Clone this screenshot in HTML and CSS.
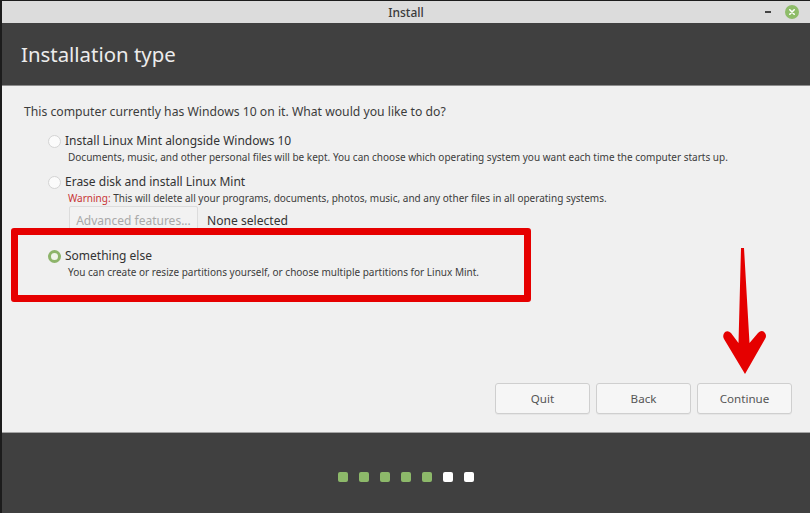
FILE: index.html
```html
<!DOCTYPE html>
<html>
<head>
<meta charset="utf-8">
<link rel="stylesheet" href="styles.css">
</head>
<body>
<div class="window">
  <div class="titlebar">
    <span class="title">Install</span>
    <div class="controls">
      <span class="minimize"></span>
      <span class="close">
        <svg class="close-icon" width="14" height="14" viewBox="0 0 14 14"><circle cx="7" cy="7" r="7" fill="#8ebc69"/><path d="M4.8 4.8 L9.2 9.2 M9.2 4.8 L4.8 9.2" stroke="#fff" stroke-width="1.6" stroke-linecap="round"/></svg>
      </span>
    </div>
  </div>
  <div class="header">
    <h1 class="page-title">Installation type</h1>
  </div>
  <div class="content">
    <p class="intro">This computer currently has Windows 10 on it. What would you like to do?</p>
    <div class="option opt1">
      <div class="opt-label"><span class="radio"></span>Install Linux Mint alongside Windows 10</div>
      <div class="opt-desc">Documents, music, and other personal files will be kept. You can choose which operating system you want each time the computer starts up.</div>
    </div>
    <div class="option opt2">
      <div class="opt-label"><span class="radio"></span>Erase disk and install Linux Mint</div>
      <div class="opt-desc"><span class="warn">Warning:</span> This will delete all your programs, documents, photos, music, and any other files in all operating systems.</div>
      <div class="adv-row">
        <span class="adv-btn">Advanced features...</span>
        <span class="adv-value">None selected</span>
      </div>
    </div>
    <div class="option opt3">
      <div class="opt-label"><span class="radio checked"></span>Something else</div>
      <div class="opt-desc">You can create or resize partitions yourself, or choose multiple partitions for Linux Mint.</div>
    </div>
    <div class="spacer"></div>
    <div class="buttons">
      <span class="btn">Quit</span>
      <span class="btn">Back</span>
      <span class="btn">Continue</span>
    </div>
    <div class="highlight"></div>
    <svg class="arrow" width="50" height="132" viewBox="0 0 50 132">
      <path d="M21 3 L24 3 L29.5 98 L38 88 Q42 84 45 88 Q47 91 45 94 L25 129 L4 94 Q2 90 5 87 Q8 85 11 88 L18.5 98 Z" fill="#e50000"/>
    </svg>
  </div>
  <div class="footer">
    <div class="dots">
      <span class="dot done"></span><span class="dot done"></span><span class="dot done"></span><span class="dot done"></span><span class="dot done"></span><span class="dot"></span><span class="dot"></span>
    </div>
  </div>
</div>
</body>
</html>
```
FILE: styles.css
```css
* { box-sizing: border-box; }
html, body { margin: 0; padding: 0; }
body {
  width: 810px;
  height: 513px;
  overflow: hidden;
  font-family: "Noto Sans", "Open Sans", sans-serif;
  background: #1c1c1c;
}
.window {
  width: 810px;
  height: 513px;
  border-left: 2px solid #1c1c1c;
  border-top: 1px solid #1c1c1c;
  display: flex;
  flex-direction: column;
}
.titlebar {
  height: 22px;
  background: #dcdcdc;
  display: flex;
  align-items: center;
  justify-content: center;
  position: relative;
}
.title {
  font-size: 12px;
  color: #3a3a3a;
  font-weight: 500;
}
.controls {
  position: absolute;
  right: 11px;
  top: 0;
  bottom: 0;
  display: flex;
  align-items: center;
  gap: 14px;
}
.minimize {
  width: 6px;
  height: 2px;
  background: #444;
  display: block;
}
.close { display: block; height: 14px; }
.close-icon { display: block; }
.header {
  height: 63px;
  background: #404040;
  border-bottom: 1px solid #8d8d8d;
  display: flex;
  align-items: center;
  padding-left: 19px;
}
.page-title {
  margin: 0;
  font-weight: 400;
  font-size: 20.4px;
  color: #ececec;
}
.content {
  flex: 1;
  background: #f0f0f0;
  position: relative;
  display: flex;
  flex-direction: column;
  padding: 18px 18px 18px 22px;
  color: #3c3c3c;
}
.intro {
  margin: 0;
  font-size: 12.2px;
  line-height: 16px;
}
.option { margin-left: 23px; }
.opt1 { margin-top: 13px; }
.opt2 { margin-top: 10px; }
.opt3 { margin-top: 13px; }
.opt-label {
  display: flex;
  align-items: center;
  font-size: 12px;
  line-height: 16px;
  color: #333;
}
.radio {
  width: 13px;
  height: 13px;
  border-radius: 50%;
  background: #fbfbfb;
  border: 1px solid #d4d4d4;
  margin-right: 4px;
  margin-left: 1px;
  flex: none;
}
.radio.checked {
  background: #f0f4ea;
  border: 3.5px solid #8db46a;
}
.opt-desc {
  margin-left: 21px;
  font-size: 10px;
  line-height: 14px;
  color: #3c3c3c;
  margin-top: 1px;
}
.warn { color: #c83434; }
.adv-row {
  margin-left: 22px;
  margin-top: 1px;
  display: flex;
  align-items: center;
}
.adv-btn {
  width: 129px;
  height: 29px;
  border: 1px solid #dcdcdc;
  border-radius: 2px;
  background: #f2f2f2;
  font-size: 12px;
  color: #a9a9a9;
  display: flex;
  align-items: center;
  justify-content: center;
}
.adv-value {
  margin-left: 9px;
  font-size: 12.1px;
  color: #333;
}
.spacer { flex: 1; }
.buttons {
  display: flex;
  justify-content: flex-end;
  gap: 6px;
}
.btn {
  width: 95px;
  height: 31px;
  border: 1px solid #cfcfcf;
  border-radius: 3px;
  background: #f6f6f6;
  box-shadow: 0 1px 0 rgba(0,0,0,0.04);
  display: flex;
  align-items: center;
  justify-content: center;
  font-size: 11.6px;
  color: #555;
}
.highlight {
  position: absolute;
  left: 9px;
  top: 142px;
  width: 520px;
  height: 74px;
  border: 7px solid #e60000;
  border-radius: 3px;
}
.arrow {
  position: absolute;
  left: 718px;
  top: 159px;
}
.footer {
  height: 81px;
  background: #404040;
  border-top: 1px solid #a5a5a5;
  display: flex;
  justify-content: center;
  padding-top: 39px;
}
.dots { display: flex; gap: 11px; height: 10px; }
.dot {
  width: 10px;
  height: 10px;
  border-radius: 2px;
  background: #ffffff;
}
.dot.done { background: #8db96a; }
```
